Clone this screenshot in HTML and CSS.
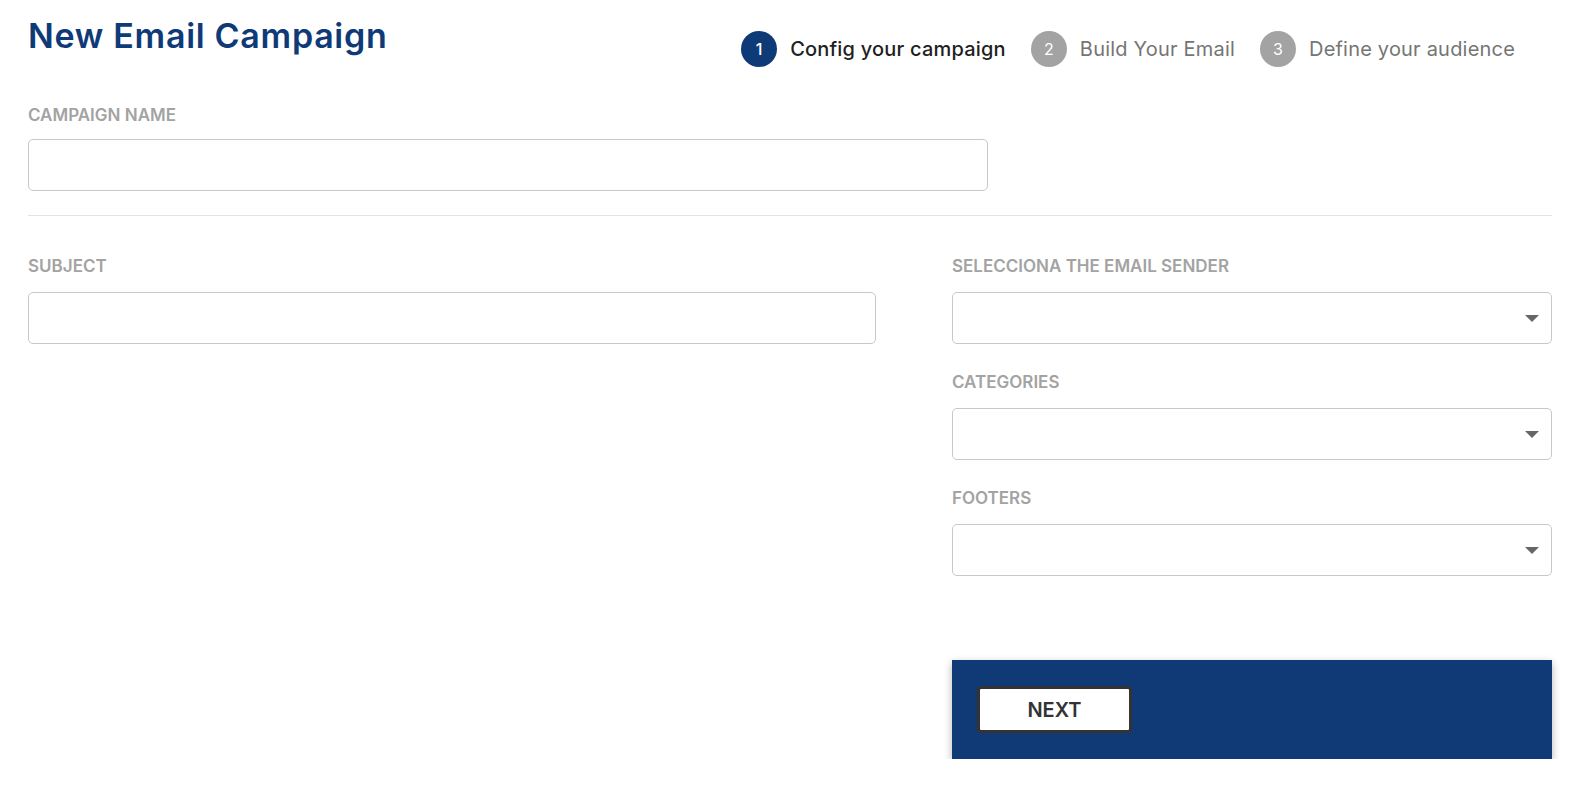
FILE: index.html
```html
<!DOCTYPE html>
<html lang="en">
<head>
<meta charset="utf-8">
<title>New Email Campaign</title>
<link rel="stylesheet" href="styles.css">
</head>
<body>
<div class="page">
  <header class="top">
    <h1 class="title">New Email Campaign</h1>
    <ol class="steps">
      <li class="step active"><span class="num">1</span><span class="step-label">Config your campaign</span></li>
      <li class="step"><span class="num">2</span><span class="step-label">Build Your Email</span></li>
      <li class="step"><span class="num">3</span><span class="step-label">Define your audience</span></li>
    </ol>
  </header>

  <div class="field name-field">
    <label class="label">CAMPAIGN NAME</label>
    <div class="input"></div>
  </div>

  <hr class="divider">

  <div class="grid">
    <div class="col-left">
      <div class="field">
        <label class="label">SUBJECT</label>
        <div class="input"></div>
      </div>
    </div>
    <div class="col-right">
      <div class="field">
        <label class="label">SELECCIONA THE EMAIL SENDER</label>
        <div class="input select"><span class="caret"></span></div>
      </div>
      <div class="field">
        <label class="label">CATEGORIES</label>
        <div class="input select"><span class="caret"></span></div>
      </div>
      <div class="field">
        <label class="label">FOOTERS</label>
        <div class="input select"><span class="caret"></span></div>
      </div>
      <div class="actions">
        <button class="next">NEXT</button>
      </div>
    </div>
  </div>
</div>
</body>
</html>
```

FILE: styles.css
```css
* { box-sizing: border-box; }
html, body { margin: 0; padding: 0; background: #fff; }
body {
  font-family: "Inter", "Roboto", "Liberation Sans", sans-serif;
  color: #222;
}
.page {
  padding: 16px 39px 0 28px;
}
.top {
  display: flex;
  justify-content: space-between;
  align-items: flex-start;
}
.title {
  margin: 0;
  font-size: 34px;
  line-height: 40px;
  font-weight: 600;
  color: #0f3a78;
  letter-spacing: 0.7px;
}
.steps {
  list-style: none;
  margin: 15px 37px 0 0;
  padding: 0;
  display: flex;
  gap: 25px;
}
.step {
  display: flex;
  align-items: center;
  gap: 13px;
  font-size: 20px;
  letter-spacing: 0.2px;
  color: #757575;
}
.step .num {
  width: 36px;
  height: 36px;
  border-radius: 50%;
  background: #a3a3a3;
  color: #fff;
  font-size: 16px;
  letter-spacing: 0;
  display: flex;
  align-items: center;
  justify-content: center;
}
.step.active .num { background: #0f3a78; }
.step.active { color: #1f1f1f; font-weight: 500; }

.label {
  display: block;
  font-size: 17px;
  line-height: 20px;
  font-weight: 600;
  color: #a3a3a3;
}
.name-field { margin-top: 38px; }
.field .input { margin-top: 16px; }
.name-field .input { margin-top: 14px; width: 960px; }
.input {
  height: 52px;
  border: 1px solid #c8c8c8;
  border-radius: 5px;
  background: #fff;
}
.divider {
  border: 0;
  border-top: 1px solid #e3e3e3;
  margin: 24px 0 0;
}
.grid {
  display: grid;
  grid-template-columns: 848px 600px;
  column-gap: 76px;
  margin-top: 40px;
}
.col-right {
  display: flex;
  flex-direction: column;
  gap: 28px;
}
.select {
  display: flex;
  align-items: center;
  justify-content: flex-end;
  padding-right: 12px;
}
.caret {
  width: 0;
  height: 0;
  border-left: 7px solid transparent;
  border-right: 7px solid transparent;
  border-top: 7px solid #666;
}
.actions {
  margin-top: 56px;
  height: 99px;
  background: #0f3a75;
  box-shadow: 0 3px 8px rgba(0,0,0,0.3);
  padding: 26px 25px;
}
.next {
  display: block;
  width: 155px;
  height: 47px;
  border: 3px solid #333;
  border-radius: 4px;
  background: #fff;
  color: #333;
  font-family: inherit;
  font-size: 20px;
  font-weight: 600;
  cursor: pointer;
}
```
